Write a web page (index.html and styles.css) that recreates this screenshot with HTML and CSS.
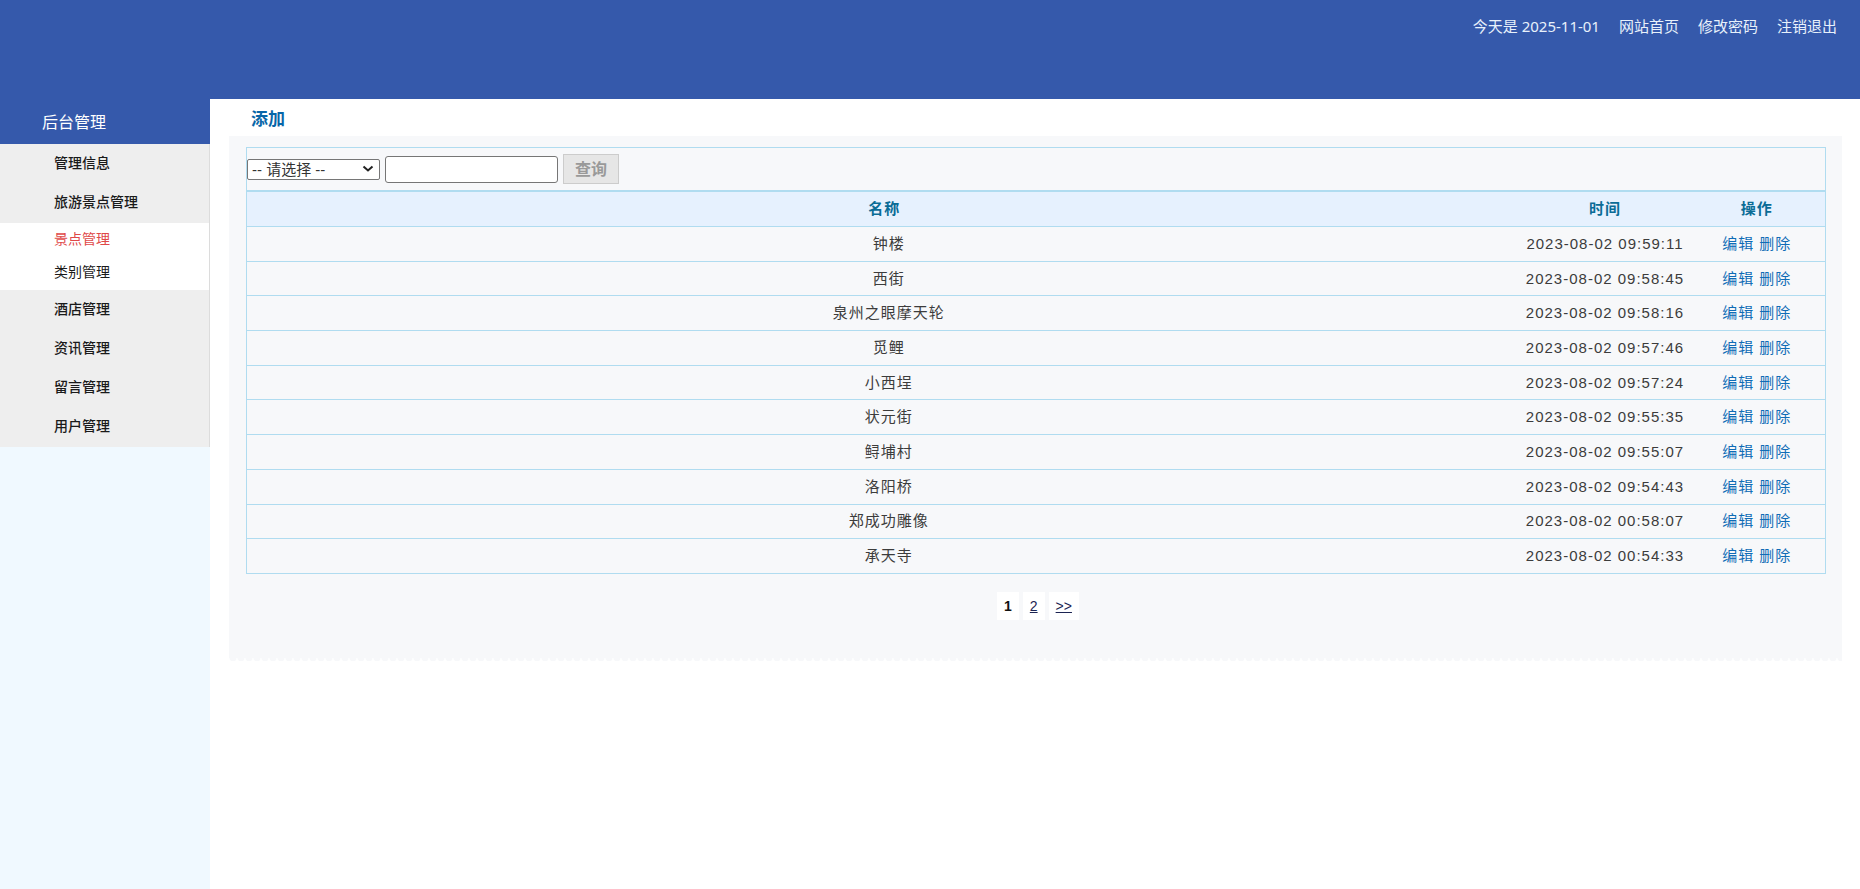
FILE: index.html
```
<!DOCTYPE html>
<html lang="zh-CN">
<head>
<meta charset="utf-8">
<title>后台管理</title>
<link rel="stylesheet" href="styles.css">
</head>
<body>
<header class="topbar">
  <span>今天是 2025-11-01</span>
  <a href="#">网站首页</a>
  <a href="#">修改密码</a>
  <a href="#">注销退出</a>
</header>
<div class="layout">
  <nav class="sidebar">
    <h1 class="sidebar-title">后台管理</h1>
    <div class="menu">
      <ul class="menu-group">
        <li><a href="#">管理信息</a></li>
        <li><a href="#">旅游景点管理</a></li>
      </ul>
      <ul class="submenu">
        <li><a class="active" href="#">景点管理</a></li>
        <li><a href="#">类别管理</a></li>
      </ul>
      <ul class="menu-group">
        <li><a href="#">酒店管理</a></li>
        <li><a href="#">资讯管理</a></li>
        <li><a href="#">留言管理</a></li>
        <li><a href="#">用户管理</a></li>
      </ul>
    </div>
  </nav>
  <main class="content">
    <h2 class="page-title"><a href="#">添加</a></h2>
    <section class="panel">
      <form class="search">
        <span class="select-wrap">
          <select class="search-field" aria-label="查询字段"><option>-- 请选择 --</option></select>
          <svg class="chevron" viewBox="0 0 12 8" aria-hidden="true"><path d="M1.500 1.500 6 5.500 10.500 1.500"/></svg>
        </span>
        <input class="search-text" type="text" aria-label="关键字">
        <button class="search-button" type="button">查询</button>
      </form>
      <table class="list">
        <colgroup><col><col class="col-time"><col class="col-actions"></colgroup>
        <thead><tr><th>名称</th><th>时间</th><th>操作</th></tr></thead>
        <tbody>
          <tr><td>钟楼</td><td>2023-08-02 09:59:11</td><td><a href="#">编辑</a> <a href="#">删除</a></td></tr>
          <tr><td>西街</td><td>2023-08-02 09:58:45</td><td><a href="#">编辑</a> <a href="#">删除</a></td></tr>
          <tr><td>泉州之眼摩天轮</td><td>2023-08-02 09:58:16</td><td><a href="#">编辑</a> <a href="#">删除</a></td></tr>
          <tr><td>觅鲤</td><td>2023-08-02 09:57:46</td><td><a href="#">编辑</a> <a href="#">删除</a></td></tr>
          <tr><td>小西埕</td><td>2023-08-02 09:57:24</td><td><a href="#">编辑</a> <a href="#">删除</a></td></tr>
          <tr><td>状元街</td><td>2023-08-02 09:55:35</td><td><a href="#">编辑</a> <a href="#">删除</a></td></tr>
          <tr><td>鲟埔村</td><td>2023-08-02 09:55:07</td><td><a href="#">编辑</a> <a href="#">删除</a></td></tr>
          <tr><td>洛阳桥</td><td>2023-08-02 09:54:43</td><td><a href="#">编辑</a> <a href="#">删除</a></td></tr>
          <tr><td>郑成功雕像</td><td>2023-08-02 00:58:07</td><td><a href="#">编辑</a> <a href="#">删除</a></td></tr>
          <tr><td>承天寺</td><td>2023-08-02 00:54:33</td><td><a href="#">编辑</a> <a href="#">删除</a></td></tr>
        </tbody>
      </table>
      <div class="pager">
        <strong>1</strong>
        <a href="#">2</a>
        <a href="#">&gt;&gt;</a>
      </div>
    </section>
  </main>
</div>
</body>
</html>
```
FILE: styles.css
```
* { box-sizing: border-box; }

body {
  margin: 0;
  min-height: 100vh;
  display: flex;
  flex-direction: column;
  background: #fff;
  color: #3c3c3c;
  font-family: "Liberation Sans", "Noto Sans CJK SC", sans-serif;
  font-size: 15px;
}

a { color: inherit; text-decoration: none; }
ul { list-style: none; margin: 0; padding: 0; }

.topbar {
  height: 99px;
  padding: 16px 23px 0;
  display: flex;
  justify-content: flex-end;
  gap: 19px;
  background: #3559ab;
  color: #e8f1fb;
  line-height: 20px;
  font-family: "Noto Sans", "Noto Sans CJK SC", sans-serif;
}

.layout { flex: 1; display: flex; }

.sidebar {
  width: 210px;
  flex: none;
  background: #f0f9ff;
  font-family: "Noto Sans CJK SC", sans-serif;
}

.sidebar-title {
  margin: 0;
  padding-left: 42px;
  background: #3559ab;
  color: #fff;
  font-size: 16px;
  font-weight: 400;
  line-height: 45px;
}

.menu {
  border-right: 1px solid #dcdcdc;
  color: #1a1a1a;
  font-size: 14px;
}

.menu a { display: block; padding: 0 0 3px 54px; }

.menu-group {
  padding-bottom: 1px;
  background: #eee;
  font-weight: 500;
  line-height: 36px;
}

.submenu { padding-bottom: 1px; background: #fff; line-height: 30px; }
.submenu .active { color: #e04848; }

.content { flex: 1; padding: 0 18px 0 19px; }

.page-title {
  margin: 0;
  padding: 5px 0 0 22px;
  color: #0766a8;
  font-size: 17px;
  line-height: 32px;
}

.panel {
  padding: 11px 16px 41px 17px;
  background:
    radial-gradient(circle at 4px 0, #f7f8fa 3px, transparent 4px) 0 100% / 8px 3px repeat-x,
    linear-gradient(#f7f8fa, #f7f8fa) 0 0 / 100% calc(100% - 3px) no-repeat;
}

.search {
  min-height: 44px;
  display: flex;
  align-items: center;
  gap: 5px;
  border: 1px solid #b0dcf0;
}

.select-wrap { display: grid; align-items: center; }
.select-wrap > * { grid-area: 1 / 1; }

.chevron {
  width: 12px;
  height: 8px;
  margin-right: 6px;
  justify-self: end;
  fill: none;
  stroke: #222;
  stroke-width: 2;
  pointer-events: none;
}

.search-field {
  appearance: none;
  width: 133px;
  height: 21px;
  padding: 0 4px;
  border: 1px solid #767676;
  border-radius: 2px;
  background-color: #fff;
  color: #333;
  font: 15px/19px "Liberation Sans", "Noto Sans CJK SC", sans-serif;
}

.search-text {
  width: 173px;
  height: 27px;
  border: 1px solid #767676;
  border-radius: 3px;
}

.search-button {
  width: 56px;
  height: 30px;
  padding: 0 0 2px;
  border: 1px solid #ccc;
  background: #e6e6e6;
  color: #999;
  font: 700 16px/20px "Noto Sans CJK SC", sans-serif;
}

.list {
  width: 100%;
  height: 383px;
  table-layout: fixed;
  border-collapse: collapse;
  border: 1px solid #b0dcf0;
  text-align: center;
  line-height: 20px;
  letter-spacing: 1px;
}

.col-time { width: 167px; }
.col-actions { width: 137px; }

.list th,
.list td { padding: 0; border-bottom: 1px solid #b0dcf0; }
.list th { height: 35px; background: #e6f1fe; color: #0a6c96; }
.list td:first-child { padding-left: 9px; }
.list td a { color: #0f6cb6; }

.pager {
  margin-top: 18px;
  padding-left: 4px;
  display: flex;
  justify-content: center;
  gap: 4px;
  font-size: 14px;
  line-height: 28px;
}

.pager > * { padding: 0 7px; background: #fff; }
.pager strong { color: #111; }
.pager a { color: #1c2452; text-decoration: underline; }
```
